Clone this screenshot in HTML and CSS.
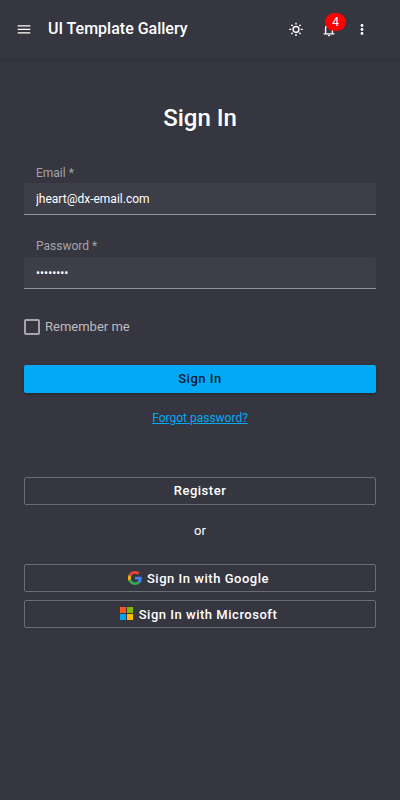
FILE: index.html
```html
<!DOCTYPE html>
<html lang="en">
<head>
<meta charset="utf-8">
<title>UI Template Gallery</title>
<link rel="stylesheet" href="styles.css">
</head>
<body>
<header class="header">
  <button class="icon-button menu" aria-label="Menu">
    <svg width="14" height="14" viewBox="0 0 14 14"><path d="M.7 3.9h12.6M.7 7.4h12.6M.7 10.9h12.6" stroke="#fff" stroke-width="1.3"/></svg>
  </button>
  <div class="title">UI Template Gallery</div>
  <div class="actions">
    <button class="icon-button" aria-label="Theme">
      <svg width="16" height="16" viewBox="0 0 16 16" fill="none" stroke="#fff"><circle cx="8" cy="8.4" r="2.9" stroke-width="1.4"/><path d="M8 1.8v1.8M8 13.1v1.8M1.2 8.4H3.3M12.7 8.4h2.1M3.4 3.8l1.2 1.2M11.4 11.8l1.2 1.2M12.6 3.8L11.4 5M4.6 11.8L3.4 13" stroke-width="1.4"/></svg>
    </button>
    <button class="icon-button bell" aria-label="Notifications">
      <svg width="16" height="16" viewBox="0 0 16 16"><path d="M4.6 12.8V7.5a3.4 3.4 0 0 1 6.8 0v5.3M2.6 12.9h10.8M8 2v2" fill="none" stroke="#fff" stroke-width="1.4"/><path d="M6.7 14.1h2.6a1.3 1.2 0 0 1-2.6 0z" fill="#fff"/></svg>
      <span class="badge">4</span>
    </button>
    <button class="icon-button" aria-label="More">
      <svg width="16" height="16" viewBox="0 0 16 16" fill="#fff"><circle cx="8" cy="4.5" r="1.4"/><circle cx="8" cy="8.5" r="1.4"/><circle cx="8" cy="12.5" r="1.4"/></svg>
    </button>
  </div>
</header>
<main class="content">
  <h1 class="heading">Sign In</h1>
  <form class="form">
    <label class="field">
      <span class="label">Email *</span>
      <input class="input" type="text" value="jheart@dx-email.com">
    </label>
    <label class="field">
      <span class="label password-label">Password *</span>
      <input class="input" type="password" value="password">
    </label>
    <label class="remember"><span class="box"></span>Remember me</label>
    <button type="button" class="button primary">Sign In</button>
    <a class="forgot" href="#">Forgot password?</a>
    <button type="button" class="button">Register</button>
    <div class="or">or</div>
    <button type="button" class="button social">
      <svg width="14" height="14" viewBox="0 0 48 48"><path fill="#EA4335" d="M24 9.5c3.54 0 6.71 1.22 9.21 3.6l6.85-6.85C35.9 2.38 30.47 0 24 0 14.62 0 6.51 5.38 2.56 13.22l7.98 6.19C12.43 13.72 17.74 9.5 24 9.5z"/><path fill="#4285F4" d="M46.98 24.55c0-1.57-.15-3.09-.38-4.55H24v9.02h12.94c-.58 2.96-2.26 5.48-4.78 7.18l7.73 6c4.51-4.18 7.09-10.36 7.09-17.65z"/><path fill="#FBBC05" d="M10.53 28.59c-.48-1.45-.76-2.99-.76-4.59s.27-3.14.76-4.59l-7.98-6.19C.92 16.46 0 20.12 0 24s.92 7.54 2.56 10.78l7.97-6.19z"/><path fill="#34A853" d="M24 48c6.48 0 11.93-2.13 15.89-5.81l-7.73-6c-2.15 1.45-4.92 2.3-8.16 2.3-6.26 0-11.57-4.22-13.47-9.91l-7.98 6.19C6.51 42.62 14.62 48 24 48z"/></svg>
      <span>Sign In with Google</span>
    </button>
    <button type="button" class="button social microsoft">
      <svg width="14" height="14" viewBox="0 0 14 14" shape-rendering="crispEdges"><path fill="#ff5722" d="M0 0h6v6H0z"/><path fill="#7fba00" d="M7 0h6v6H7z"/><path fill="#03a4f0" d="M0 7h6v6H0z"/><path fill="#ffb900" d="M7 7h6v6H7z"/></svg>
      <span>Sign In with Microsoft</span>
    </button>
  </form>
</main>
</body>
</html>
```
FILE: styles.css
```css
* { box-sizing: border-box; }
body {
  margin: 0;
  min-height: 800px;
  background: #363640;
  color: #fff;
  font: 13px/16px Roboto, sans-serif;
}
button, input { font-family: inherit; color: inherit; }
.header {
  display: flex;
  align-items: center;
  height: 58px;
  padding: 0 22px 0 8px;
  box-shadow: 0 2px 6px rgba(0, 0, 0, .12);
}
.icon-button {
  position: relative;
  display: flex;
  align-items: center;
  justify-content: center;
  width: 32px;
  height: 32px;
  padding: 0;
  border: 0;
  background: none;
}
.icon-button svg { display: block; }
.title {
  margin-left: 8px;
  font-size: 16px;
  line-height: 20px;
  font-weight: 500;
}
.actions { display: flex; gap: 1px; margin-left: auto; }
.badge {
  position: absolute;
  left: 12px;
  top: 0;
  width: 21px;
  height: 18px;
  border-radius: 9px;
  background: #f00;
  font-size: 12px;
  line-height: 18px;
  text-align: center;
}
.content { padding: 44px 24px 0; }
.heading {
  margin: 0 0 49px;
  font-size: 24px;
  line-height: 32px;
  font-weight: 500;
  text-align: center;
}
.form { display: flex; flex-direction: column; }
.field { display: flex; flex-direction: column; height: 32px; margin-bottom: 42px; }
.label {
  height: 18px;
  margin: -18px 0 0 12px;
  color: #a4a4a8;
  font-size: 12px;
  line-height: 16px;
}
.password-label { height: 19px; margin-top: -19px; }
.input {
  height: 32px;
  flex: none;
  padding: 0 12px;
  border: 0;
  border-bottom: 1px solid #949499;
  border-radius: 2px 2px 0 0;
  background: #3e3e48;
  font-size: 12px;
  outline: 0;
}
.remember {
  display: flex;
  align-items: center;
  gap: 5px;
  height: 16px;
  margin-top: -12px;
  color: #bcbcbf;
}
.box { width: 16px; height: 16px; border: 2px solid #a5a5a9; border-radius: 2px; }
.button {
  display: flex;
  align-items: center;
  justify-content: center;
  gap: 5px;
  height: 28px;
  padding: 0;
  border: 1px solid #6c6c73;
  border-radius: 2px;
  background: none;
  font-size: 13px;
  line-height: 16px;
  font-weight: 500;
  letter-spacing: .52px;
}
.primary {
  margin-top: 30px;
  border: 0;
  background: #03a9f4;
  color: rgba(0, 0, 0, .87);
  box-shadow: 0 1px 3px rgba(0, 0, 0, .35);
}
.forgot {
  align-self: center;
  margin: 17px 0 51px;
  color: #03a9f4;
  font-size: 12px;
}
.or { margin: 18px 0 25px; text-align: center; }
.social { padding-right: 3px; }
.social span { padding-top: 2px; }
.microsoft { margin-top: 8px; }
```
